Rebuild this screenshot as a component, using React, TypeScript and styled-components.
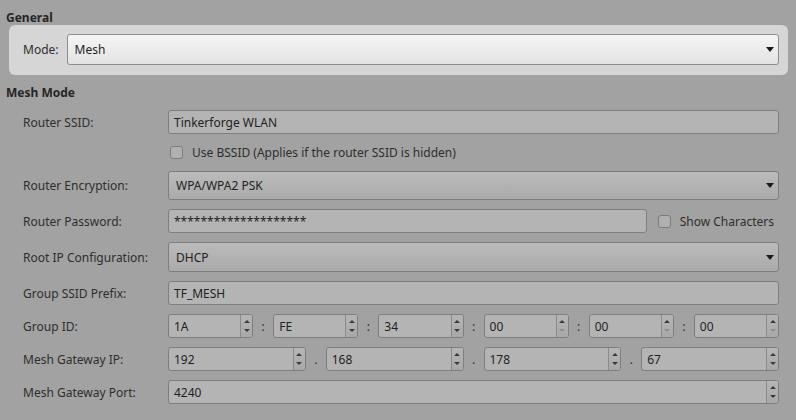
import React from "react";
import styled, { createGlobalStyle } from "styled-components";

const GlobalStyle = createGlobalStyle`
    html, body {
        margin: 0;
        padding: 0;
        background: #a2a2a2;
    }
    body {
        font-family: "Noto Sans", "Open Sans", sans-serif;
        font-size: 12px;
        color: #2c2c2c;
    }
`;

const Page = styled.div`
    width: 796px;
    height: 420px;
    padding: 10px 8px 0 6px;
    box-sizing: border-box;
    overflow: hidden;
`;

const SectionTitle = styled.div`
    font-weight: 700;
    line-height: 15px;
    height: 15px;
    color: #262626;
`;

const GroupBox = styled.div`
    margin: 0 0 10px 3px;
    padding: 9px 9px 10px 14px;
    background: #d6d6d6;
    border-radius: 6px;
    display: flex;
    align-items: center;
    gap: 8px;
`;

const FormGrid = styled.div`
    display: grid;
    grid-template-columns: 145px 1fr;
    row-gap: 9px;
    margin-top: 10px;
    padding-left: 17px;
    padding-right: 9px;
    align-items: center;
`;

const Label = styled.div`
    color: #2e2e2e;
    white-space: nowrap;
`;

const Combo = styled.div<{ $light?: boolean; $h?: number }>`
    flex: 1;
    height: ${(p) => p.$h ?? 29}px;
    box-sizing: border-box;
    border: 1px solid ${(p) => (p.$light ? "#8e8e8e" : "#7e7e7e")};
    border-radius: 3px;
    background: ${(p) =>
        p.$light
            ? "linear-gradient(#f5f5f5, #e3e3e3)"
            : "linear-gradient(#bbbbbb, #aaaaaa)"};
    display: flex;
    align-items: center;
    padding: 0 4px 0 7px;
    color: #1f1f1f;
`;

const ComboText = styled.span`
    flex: 1;
`;

const Field = styled.div`
    height: 24px;
    box-sizing: border-box;
    border: 1px solid #7e7e7e;
    border-radius: 3px;
    background: #b4b4b4;
    display: flex;
    align-items: center;
    padding-left: 5px;
    color: #1f1f1f;
    flex: 1;
    min-width: 0;
`;

const FieldRow = styled.div`
    display: flex;
    align-items: center;
`;

const Check = styled.span`
    width: 13px;
    height: 13px;
    box-sizing: border-box;
    border: 1px solid #7c7c7c;
    border-radius: 3px;
    background: #b0b0b0;
    display: inline-block;
    flex: none;
`;

const CheckLabel = styled.label<{ $end?: boolean }>`
    display: flex;
    align-items: center;
    gap: 9px;
    height: 19px;
    padding-left: 2px;
    padding-right: ${(p) => (p.$end ? 5 : 0)}px;
    color: #2e2e2e;
`;

const PasswordRow = styled.div`
    display: flex;
    align-items: center;
    gap: 9px;
`;

const Spin = styled.div`
    flex: 1;
    height: 24px;
    box-sizing: border-box;
    border: 1px solid #7e7e7e;
    border-radius: 3px;
    background: #b4b4b4;
    display: flex;
    min-width: 0;
    overflow: hidden;
`;

const SpinText = styled.div`
    flex: 1;
    display: flex;
    align-items: center;
    padding-left: 5px;
    color: #1f1f1f;
`;

const SpinButtons = styled.div`
    width: 11px;
    border-left: 1px solid #8a8a8a;
    background: linear-gradient(#b6b6b6, #a8a8a8);
    display: flex;
    flex-direction: column;
    align-items: center;
    justify-content: space-around;
    padding: 2px 0;
`;

const Arrow = styled.span<{ $down?: boolean; $dim?: boolean }>`
    width: 0;
    height: 0;
    border-left: 3px solid transparent;
    border-right: 3px solid transparent;
    ${(p) =>
        p.$down
            ? `border-top: 3px solid ${p.$dim ? "#8e8e8e" : "#3a3a3a"};`
            : `border-bottom: 3px solid ${p.$dim ? "#8e8e8e" : "#3a3a3a"};`}
`;

const Sep = styled.span`
    width: 20px;
    text-align: center;
    flex: none;
    color: #2e2e2e;
`;

const DropArrow = () => (
    <svg width="8" height="5" viewBox="0 0 8 5">
        <path d="M0 0 H8 L4 5 Z" fill="#1a1a1a" />
    </svg>
);

const SpinBox: React.FC<{ value: string; min?: boolean }> = ({ value, min }) => (
    <Spin>
        <SpinText>{value}</SpinText>
        <SpinButtons>
            <Arrow />
            <Arrow $down $dim={min} />
        </SpinButtons>
    </Spin>
);

const groupId = ["1A", "FE", "34", "00", "00", "00"];
const gatewayIp = ["192", "168", "178", "67"];

export default function App() {
    return (
        <>
            <GlobalStyle />
            <Page>
                <SectionTitle>General</SectionTitle>
                <GroupBox>
                    <Label>Mode:</Label>
                    <Combo $light $h={31}>
                        <ComboText>Mesh</ComboText>
                        <DropArrow />
                    </Combo>
                </GroupBox>
                <SectionTitle>Mesh Mode</SectionTitle>
                <FormGrid>
                    <Label>Router SSID:</Label>
                    <Field>Tinkerforge WLAN</Field>

                    <div />
                    <CheckLabel>
                        <Check />
                        Use BSSID (Applies if the router SSID is hidden)
                    </CheckLabel>

                    <Label>Router Encryption:</Label>
                    <FieldRow>
                        <Combo>
                            <ComboText>WPA/WPA2 PSK</ComboText>
                            <DropArrow />
                        </Combo>
                    </FieldRow>

                    <Label>Router Password:</Label>
                    <PasswordRow>
                        <Field>********************</Field>
                        <CheckLabel $end>
                            <Check />
                            Show Characters
                        </CheckLabel>
                    </PasswordRow>

                    <Label>Root IP Configuration:</Label>
                    <FieldRow>
                        <Combo $h={30}>
                            <ComboText>DHCP</ComboText>
                            <DropArrow />
                        </Combo>
                    </FieldRow>

                    <Label>Group SSID Prefix:</Label>
                    <Field>TF_MESH</Field>

                    <Label>Group ID:</Label>
                    <FieldRow>
                        {groupId.map((v, i) => (
                            <React.Fragment key={i}>
                                {i > 0 && <Sep>:</Sep>}
                                <SpinBox value={v} min={v === "00"} />
                            </React.Fragment>
                        ))}
                    </FieldRow>

                    <Label>Mesh Gateway IP:</Label>
                    <FieldRow>
                        {gatewayIp.map((v, i) => (
                            <React.Fragment key={i}>
                                {i > 0 && <Sep>.</Sep>}
                                <SpinBox value={v} />
                            </React.Fragment>
                        ))}
                    </FieldRow>

                    <Label>Mesh Gateway Port:</Label>
                    <FieldRow>
                        <SpinBox value="4240" />
                    </FieldRow>
                </FormGrid>
            </Page>
        </>
    );
}
